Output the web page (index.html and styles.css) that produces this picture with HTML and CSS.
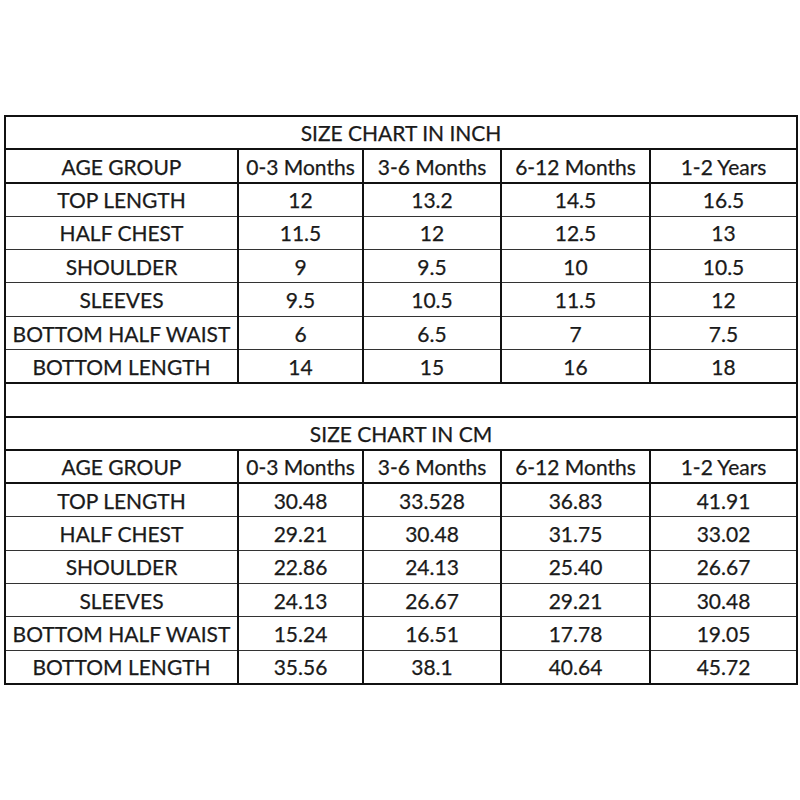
FILE: index.html
```html
<!DOCTYPE html>
<html>
<head>
<meta charset="utf-8">
<link rel="stylesheet" href="styles.css">
</head>
<body>
<table class="chart">
  <colgroup>
    <col class="c-label"><col class="c1"><col class="c2"><col class="c3"><col class="c4">
  </colgroup>
  <tr class="title"><td colspan="5">SIZE CHART IN INCH</td></tr>
  <tr class="head"><td>AGE GROUP</td><td>0-3 Months</td><td>3-6 Months</td><td>6-12 Months</td><td>1-2 Years</td></tr>
  <tr><td>TOP LENGTH</td><td>12</td><td>13.2</td><td>14.5</td><td>16.5</td></tr>
  <tr><td>HALF CHEST</td><td>11.5</td><td>12</td><td>12.5</td><td>13</td></tr>
  <tr><td>SHOULDER</td><td>9</td><td>9.5</td><td>10</td><td>10.5</td></tr>
  <tr><td>SLEEVES</td><td>9.5</td><td>10.5</td><td>11.5</td><td>12</td></tr>
  <tr><td>BOTTOM HALF WAIST</td><td>6</td><td>6.5</td><td>7</td><td>7.5</td></tr>
  <tr class="last"><td>BOTTOM LENGTH</td><td>14</td><td>15</td><td>16</td><td>18</td></tr>
  <tr class="gap"><td colspan="5"></td></tr>
  <tr class="title"><td colspan="5">SIZE CHART IN CM</td></tr>
  <tr class="head"><td>AGE GROUP</td><td>0-3 Months</td><td>3-6 Months</td><td>6-12 Months</td><td>1-2 Years</td></tr>
  <tr><td>TOP LENGTH</td><td>30.48</td><td>33.528</td><td>36.83</td><td>41.91</td></tr>
  <tr><td>HALF CHEST</td><td>29.21</td><td>30.48</td><td>31.75</td><td>33.02</td></tr>
  <tr><td>SHOULDER</td><td>22.86</td><td>24.13</td><td>25.40</td><td>26.67</td></tr>
  <tr><td>SLEEVES</td><td>24.13</td><td>26.67</td><td>29.21</td><td>30.48</td></tr>
  <tr><td>BOTTOM HALF WAIST</td><td>15.24</td><td>16.51</td><td>17.78</td><td>19.05</td></tr>
  <tr class="last"><td>BOTTOM LENGTH</td><td>35.56</td><td>38.1</td><td>40.64</td><td>45.72</td></tr>
</table>
</body>
</html>
```
FILE: styles.css
```css
html, body {
  margin: 0;
  padding: 0;
  background: #ffffff;
}
body {
  padding-top: 115px;
  padding-left: 4px;
}
.chart {
  width: 792px;
  border-collapse: collapse;
  table-layout: fixed;
  border: 2px solid #111;
  font-family: Lato, "Open Sans", sans-serif;
  font-size: 21px;
  color: #1a1a1a;
  -webkit-text-stroke: 0.25px #1a1a1a;
}
.c-label { width: 233px; }
.c1 { width: 125px; }
.c2 { width: 138px; }
.c3 { width: 149px; }
.c4 { width: 147px; }
.chart td {
  height: 33.4px;
  padding: 0;
  text-align: center;
  vertical-align: middle;
  border-left: 2px solid #111;
  border-right: 2px solid #111;
  border-top: 1px solid #333;
  border-bottom: 1px solid #333;
  white-space: nowrap;
  overflow: visible;
  box-sizing: border-box;
}
.chart .title td,
.chart .gap td {
  border-top: 2px solid #111;
  border-bottom: 2px solid #111;
}
.chart .head td {
  border-bottom: 2px solid #111;
}
.chart .last td {
  border-bottom: 2px solid #111;
}
```
